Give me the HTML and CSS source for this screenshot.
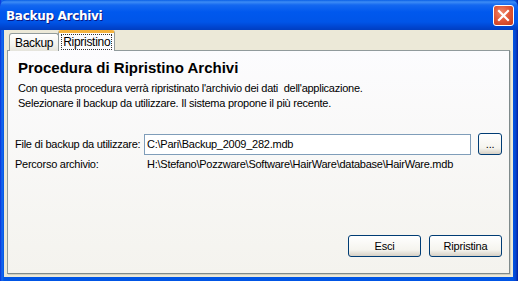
FILE: index.html
```html
<!DOCTYPE html>
<html lang="it">
  <head>
    <meta charset="utf-8" />
    <title>Backup Archivi</title>
    <link rel="stylesheet" href="styles.css">
  </head>
  <body>
    <div class="window">
      <!-- title bar -->
      <div class="titlebar">
        <span class="title">Backup Archivi</span>
        <div class="close-btn">
          <svg width="13" height="13" viewBox="0 0 13 13">
            <path d="M2 2 L11 11 M11 2 L2 11" stroke="#fff" stroke-width="2.2" stroke-linecap="square" />
          </svg>
        </div>
      </div>

      <div class="client">
        <div class="tabs">
          <div class="tab">Backup</div>
          <div class="tab tab-active"><span class="focus">Ripristino</span></div>
        </div>

        <div class="panel">
          <h1 class="heading">Procedura di Ripristino Archivi</h1>
          <p class="intro">Con questa procedura verrà ripristinato l'archivio dei dati &nbsp;dell'applicazione.<br />Selezionare il backup da utilizzare. Il sistema propone il più recente.</p>

          <div class="row row-file">
            <span class="label">File di backup da utilizzare:</span>
            <div class="input">C:\Pari\Backup_2009_282.mdb</div>
            <button class="btn btn-browse">...</button>
          </div>
          <div class="row row-path">
            <span class="label">Percorso archivio:</span>
            <span class="path">H:\Stefano\Pozzware\Software\HairWare\database\HairWare.mdb</span>
          </div>

          <div class="actions">
            <button class="btn btn-action">Esci</button>
            <button class="btn btn-action">Ripristina</button>
          </div>
        </div>
      </div>
    </div>
  </body>
</html>
```

FILE: styles.css
```css
* {
  box-sizing: border-box;
}

body {
  margin: 0;
  font-family: "Liberation Sans", Arial, sans-serif;
  font-size: 11px;
  letter-spacing: -0.25px;
  color: black;
}

.window {
  width: 518px;
  height: 281px;
  background: linear-gradient(to right, #0831d9 0px, #166aee 2px, #0055e5 4px, #0055e5 513px, #0842c9 516px, #001ea0 518px);
  display: flex;
  flex-direction: column;
}

/* title bar */
.titlebar {
  height: 30px;
  flex-shrink: 0;
  display: flex;
  align-items: center;
  justify-content: space-between;
  padding: 0 4px 0 6px;
  border-radius: 7px 7px 0 0;
  background: linear-gradient(to bottom, #0a5fe6 0px, #3d8cf5 2px, #1468f0 5px, #0058ee 12px, #0055e8 22px, #0045d0 27px, #003ec0 30px);
}

.title {
  color: white;
  font-family: "DejaVu Sans", sans-serif;
  font-weight: bold;
  font-size: 12px;
  letter-spacing: -0.3px;
  text-shadow: 1px 1px 0 #0a1883;
  margin-top: 1px;
}

.close-btn {
  width: 21px;
  height: 21px;
  border: 1px solid white;
  border-radius: 3px;
  background: radial-gradient(circle at 40% 35%, #f08a6c 0%, #e2593a 45%, #c4391a 100%);
  display: flex;
  align-items: center;
  justify-content: center;
  margin-top: 1px;
}

/* client area */
.client {
  flex: 1;
  margin: 0 5px 4px 4px;
  background: #ece9d8;
  padding: 0 3px 3px 3px;
  display: flex;
  flex-direction: column;
}

.tabs {
  display: flex;
  align-items: flex-end;
  height: 21px;
  padding-left: 2px;
  position: relative;
  z-index: 1;
  margin-bottom: -1px;
}

.tab {
  height: 18px;
  padding: 2px 5px 0 5px;
  font-size: 12px;
  letter-spacing: -0.3px;
  border: 1px solid #919b9c;
  border-bottom: none;
  border-radius: 3px 3px 0 0;
  background: linear-gradient(to bottom, #ffffff, #f3f3ef 60%, #e5e4dc);
}

.tab-active {
  height: 21px;
  padding: 2px 3px 0 3px;
  background: #fcfcfe;
  border-top: 3px solid #f4b33d;
  margin-left: -1px;
}

.focus {
  outline: 1px dotted #333;
  padding: 0 1px;
}

.panel {
  flex: 1;
  border: 1px solid #919b9c;
  border-right-color: #7f8a8b;
  border-bottom-color: #7f8a8b;
  box-shadow: 1px 1px 0 #d0cebf;
  background: linear-gradient(to bottom, #fcfcfe, #f4f3ee);
  padding: 8px 7px 15px 7px;
  display: flex;
  flex-direction: column;
}

.heading {
  margin: 0 0 0 3px;
  font-size: 15px;
  font-weight: bold;
  letter-spacing: 0;
  line-height: 18px;
}

.intro {
  margin: 4px 0 0 3px;
  line-height: 15px;
  font-size: 11px;
}

.row {
  display: flex;
  align-items: center;
}

.row-file {
  margin-top: 22px;
}

.row-path {
  margin-top: 3px;
}

.label {
  width: 129px;
  flex-shrink: 0;
  white-space: nowrap;
  font-size: 11px;
}

.input {
  width: 331px;
  height: 21px;
  border: 1px solid #7f9db9;
  background: white;
  padding: 3px 3px 0 2px;
  font-size: 11px;
}

.path {
  margin-left: 3px;
}

.btn {
  font-family: "Liberation Sans", Arial, sans-serif;
  font-size: 11px;
  letter-spacing: -0.2px;
  color: black;
  border: 1px solid #003c74;
  border-radius: 3px;
  background: linear-gradient(to bottom, #ffffff, #f5f4ee 70%, #d6d0c5);
  padding: 0;
}

.btn-browse {
  width: 24px;
  height: 22px;
  margin-left: 7px;
  line-height: 18px;
}

.actions {
  margin-top: auto;
  display: flex;
  justify-content: flex-end;
  gap: 8px;
  padding-right: 0;
  margin-bottom: 1px;
}

.btn-action {
  width: 73px;
  height: 22px;
}
```
